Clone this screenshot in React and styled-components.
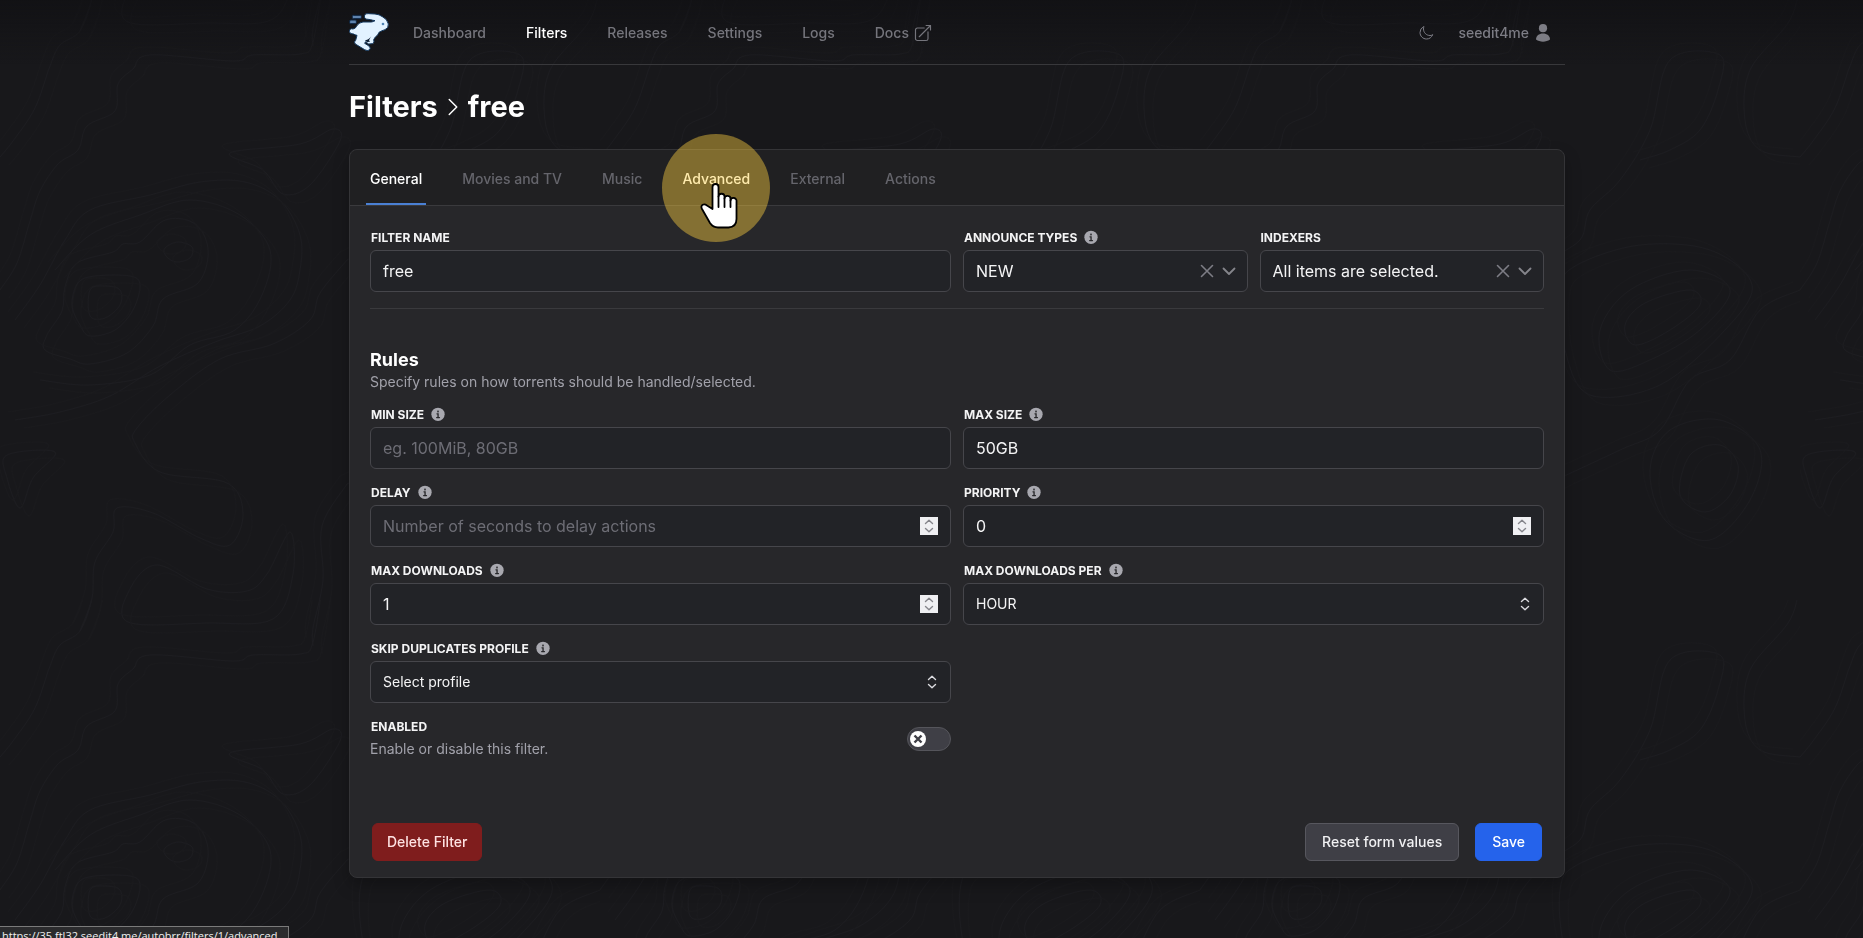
import React, { useState } from "react";
import styled, { createGlobalStyle, css } from "styled-components";

const GlobalStyle = createGlobalStyle`
  *, *::before, *::after { box-sizing: border-box; }
  html { background: #18181b; }
  body {
    margin: 0;
    color: #ffffff;
    font-family: Inter, "Liberation Sans", sans-serif;
    font-size: 14px;
    line-height: 20px;
    overflow: hidden;
  }
  button, input, select { font: inherit; color: inherit; margin: 0; }
  h1, h2, p { margin: 0; }
  a { color: inherit; text-decoration: none; }
  svg { display: block; flex: none; }
`;

/* ---------- page frame ---------- */

const Backdrop = styled.svg`
  position: fixed;
  inset: 0;
  width: 100%;
  height: 100%;
  z-index: -1;
`;

const Page = styled.div`
  min-height: 100vh;
  padding-left: 51px;
  background: linear-gradient(#0e0e1199, #18181b00 64px);
`;

const Container = styled.div`
  max-width: 1280px;
  margin: 0 auto;
  padding: 0 32px;
`;

const Header = styled.header`
  display: flex;
  align-items: center;
  justify-content: space-between;
  height: 65px;
  border-bottom: 1px solid #38383b;
`;

const HeaderGroup = styled.div`
  display: flex;
  align-items: center;
`;

const NavList = styled.nav`
  display: flex;
  gap: 40px;
  margin-left: 24px;
  padding-top: 2px;
`;

const NavLink = styled.a`
  display: flex;
  align-items: center;
  gap: 4px;
  font-weight: 500;
  color: ${(p) => (p.$active ? "#ffffff" : "#75757c")};
`;

const IconButton = styled.button`
  display: flex;
  align-items: center;
  gap: 6px;
  padding: 0;
  border: 0;
  background: none;
  color: #7d7d85;
  font-weight: 500;
`;

const UserArea = styled(HeaderGroup)`
  gap: 24px;
  padding: 2px 14px 0 0;
`;

const Title = styled.h1`
  display: flex;
  align-items: center;
  gap: 3px;
  padding: 24px 0;
  font-size: 29px;
  line-height: 36px;
  font-weight: 700;
`;

/* ---------- card and tabs ---------- */

const Card = styled.main`
  border: 1px solid #343437;
  border-radius: 8px;
  background: #27272a;
  box-shadow: 0 8px 16px rgba(0, 0, 0, 0.25);
`;

const Tabs = styled.nav`
  display: flex;
  gap: 32px;
  padding: 0 16px;
  border-bottom: 1px solid #3a3a3d;
  border-radius: 8px 8px 0 0;
  background: #202022;
`;

const Tab = styled.a`
  position: relative;
  padding: 19px 4px 14px;
  border-bottom: 2px solid ${(p) => (p.$state === "active" ? "#4a80d4" : "transparent")};
  font-weight: 500;
  color: ${(p) => (p.$state ? "#ffffff" : "#65656c")};
`;

const ClickHalo = styled.span`
  position: absolute;
  left: calc(50% - 54px);
  top: -16px;
  width: 108px;
  height: 108px;
  border-radius: 50%;
  background: rgba(255, 209, 66, 0.43);
  pointer-events: none;
  z-index: 2;

  svg {
    position: absolute;
    left: 38px;
    top: 49px;
  }
`;

const Form = styled.form`
  padding: 0 20px 16px;
`;

const TopSection = styled.div`
  padding: 24px 0 16px;
  border-bottom: 1px solid #3a3a3d;
`;

const Grid = styled.div`
  display: grid;
  grid-template-columns: 1fr 1fr;
  gap: 16px 12px;
`;

const SectionTitle = styled.h2`
  padding-top: 39px;
  font-size: 18px;
  line-height: 24px;
  font-weight: 700;
`;

const Muted = styled.p`
  color: #a1a1aa;
`;

const RulesGrid = styled(Grid)`
  margin-top: 15px;
`;

/* ---------- fields ---------- */

const FieldBox = styled.div`
  min-width: 0;
  grid-column: ${(p) => (p.$first ? 1 : "auto")};
`;

const LabelRow = styled.div`
  display: flex;
  align-items: center;
  gap: 6px;
  height: 16px;
  margin-bottom: 4px;
  color: #a8a8af;
`;

const Label = styled.label`
  padding-left: 1px;
  color: #f4f4f5;
  font-size: 12px;
  line-height: 16px;
  font-weight: 700;
  text-transform: uppercase;
  white-space: nowrap;
`;

const Control = styled.div`
  display: flex;
  align-items: center;
  height: 42px;
  padding-right: 11px;
  border: 1px solid #46464b;
  border-radius: 6px;
  background: #222327;
`;

const bareControl = css`
  flex: 1;
  min-width: 0;
  height: 40px;
  padding: 0 12px;
  border: 0;
  outline: 0;
  background: transparent;
  color: #f4f4f5;
  appearance: none;
`;

const Input = styled.input`
  ${bareControl}
  font-size: 16px;

  &::placeholder { color: #6d6d75; opacity: 1; }
  &[type="number"] { appearance: textfield; }
  &::-webkit-inner-spin-button { appearance: none; }
`;

const Select = styled.select`
  ${bareControl}
  font-size: ${(p) => (p.$large ? 16 : 14)}px;

  option { background: #27272a; }
`;

const Spinner = styled.button`
  display: grid;
  place-items: center;
  width: 18px;
  height: 18px;
  margin-right: 1px;
  padding: 0;
  border: 0;
  background: #efeff2;
  color: #85858b;
`;

const Trailing = styled.span`
  display: flex;
  align-items: center;
  gap: 8px;
  color: ${(p) => (p.$bright ? "#dcdce0" : "#85858b")};
  padding-right: ${(p) => (p.$bright ? 2 : 0)}px;
`;

const EnabledRow = styled.div`
  grid-column: 1;
  display: flex;
  align-items: center;
  justify-content: space-between;
  height: 40px;
`;

const Toggle = styled.label`
  position: relative;
  display: flex;
  align-items: center;
  justify-content: ${(p) => (p.$on ? "flex-end" : "flex-start")};
  width: 44px;
  height: 24px;
  padding: 0 2px;
  border: 1px solid #55555b;
  border-radius: 12px;
  background: ${(p) => (p.$on ? "#2563eb" : "#3f3f46")};

  input {
    position: absolute;
    inset: 0;
    margin: 0;
    opacity: 0;
  }
`;

const Knob = styled.span`
  display: grid;
  place-items: center;
  width: 16px;
  height: 16px;
  border-radius: 50%;
  background: #ffffff;
  color: #3f3f46;
`;

const Actions = styled.div`
  display: flex;
  gap: 16px;
  margin-top: 64px;
  padding: 0 2px;
`;

const tones = {
  danger: "padding: 0 14px; background: #7f1d1d; border-color: #7f1d1d; color: #fee2e2; margin-right: auto;",
  neutral: "background: #3f3f46; border-color: #57575e; color: #f1f1f3;",
  primary: "background: #2563eb; border-color: #2563eb;",
};

const Button = styled.button`
  height: 38px;
  padding: 0 16px;
  border: 1px solid;
  border-radius: 6px;
  color: #ffffff;
  font-weight: 500;
  ${(p) => tones[p.$tone]}
`;

const StatusBar = styled.div`
  position: fixed;
  left: 0;
  bottom: 0;
  height: 12px;
  padding: 1px 11px 0 2px;
  overflow: hidden;
  border-top: 1px solid #7a7a7a;
  border-right: 1px solid #7a7a7a;
  background: #2b2b2d;
  color: #f0f0f0;
  font-family: "Open Sans", "Noto Sans", sans-serif;
  font-size: 11px;
  line-height: 16px;
  white-space: nowrap;
`;

/* ---------- drawings ---------- */

const stroke = { fill: "none", stroke: "currentColor", strokeLinecap: "round", strokeLinejoin: "round" };

function Logo() {
  return (
    <svg width="40" height="40" viewBox="27 36 120 120" aria-hidden="true">
      <g fill="#5f83ad" stroke="#0b2340" strokeWidth="3">
        <rect x="37" y="46" width="27" height="10" rx="3" />
        <rect x="29" y="60" width="20" height="11" rx="3" />
      </g>
      <path
        d="M74 45 Q77 40 85 41 L105 42 Q118 43 127 50 Q142 57 145 72 Q146 85 135 89 Q124 92 117 97 Q115 105 106 111 L101 119 Q105 128 97 131 L86 132 L77 125 L74 130 L87 138 Q94 145 88 150 Q82 154 74 149 L46 132 Q40 126 47 121 L51 106 Q44 105 41 102 Q29 103 28 94 Q29 84 39 87 Q47 86 50 78 Q57 67 69 66 L94 66 Q101 65 105 62 Q98 61 92 59 L77 57 Q71 52 74 45 Z"
        fill="#e2f2ff"
        stroke="#15395f"
        strokeWidth="3"
        strokeLinejoin="round"
      />
      <path d="M75 121 Q89 118 94 108 L87 121 L90 125 L81 126 Z" fill="#0d1e33" />
      <circle cx="129" cy="72" r="4" fill="#4e83b4" />
    </svg>
  );
}

const ExternalIcon = () => (
  <svg width="20" height="20" viewBox="0 0 24 24" {...stroke} strokeWidth="1.4">
    <path d="M13.5 6H5.25A2.25 2.25 0 0 0 3 8.25v10.5A2.25 2.25 0 0 0 5.25 21h10.5A2.25 2.25 0 0 0 18 18.75V10.5m-10.5 6L21 3m0 0h-5.25M21 3v5.25" />
  </svg>
);

const MoonIcon = () => (
  <svg width="16" height="16" viewBox="0 0 24 24" {...stroke} strokeWidth="1.5">
    <path d="M21.752 15.002A9.72 9.72 0 0 1 18 15.75c-5.385 0-9.75-4.365-9.75-9.75 0-1.33.266-2.597.748-3.752A9.753 9.753 0 0 0 3 11.25C3 16.635 7.365 21 12.75 21a9.753 9.753 0 0 0 9.002-5.998Z" />
  </svg>
);

const UserIcon = () => (
  <svg width="16" height="18" viewBox="0 0 16 18" fill="currentColor">
    <circle cx="8" cy="4.2" r="4.1" />
    <path d="M1 15.6C1 11.8 4 9.6 8 9.6s7 2.2 7 6C13 17 10.6 17.7 8 17.7S3 17 1 15.6Z" />
  </svg>
);

const TitleChevron = () => (
  <svg width="24" height="24" viewBox="0 0 24 24" {...stroke} strokeWidth="1.5">
    <path d="m8.25 4.5 7.5 7.5-7.5 7.5" />
  </svg>
);

const InfoIcon = () => (
  <svg width="16" height="16" viewBox="0 0 24 24">
    <circle cx="12" cy="11" r="10" fill="currentColor" />
    <g fill="none" stroke="#27272a" strokeWidth="2" strokeLinecap="round">
      <path d="M10.500 10.300h1.600v5.500M10 15.900h4.200" />
      <circle cx="12" cy="6.600" r="0.500" />
    </g>
  </svg>
);

const ClearIcon = () => (
  <svg width="14" height="14" viewBox="0 0 14 14" {...stroke} strokeWidth="1.6">
    <path d="m1.500 1.500 11 11M12.500 1.500l-11 11" />
  </svg>
);

const DownIcon = () => (
  <svg width="14" height="14" viewBox="0 0 14 14" {...stroke} strokeWidth="1.8">
    <path d="m1.500 4.500 5.500 5.500 5.500-5.500" />
  </svg>
);

const UpDownIcon = () => (
  <svg width="10" height="14" viewBox="0 0 10 14" {...stroke} strokeWidth="1.4">
    <path d="m1.500 4.500L5 1.300l3.500 3.200M1.500 9.500 5 12.700l3.500-3.200" />
  </svg>
);

const CrossIcon = () => (
  <svg width="10" height="10" viewBox="0 0 10 10" fill="none" stroke="currentColor" strokeWidth="2.4">
    <path d="m1.500 1.500 7 7M8.500 1.500l-7 7" />
  </svg>
);

const HandIcon = () => (
  <svg width="38" height="46" viewBox="0 0 38 46" fill="#ffffff" stroke="#000000" strokeWidth="1.8" strokeLinejoin="round" strokeLinecap="round">
    <path d="M12.500 26V4a3 3 0 0 1 6 0v9.500a3 3 0 0 1 6 0.500v1.500a3 3 0 0 1 6 0.700v1.300a3 3 0 0 1 6 1V36q0 8-8 8.500H18q-5 0-8-4.500L2 26c-2-4 2-6 5-3.500Z" />
    <path d="M18.500 13.500V24M24.500 15.500V24M30.500 17.500V24" fill="none" />
  </svg>
);

/* Turns "x,y x,y ..." into a smooth curve through the points. */
function curve(list, closed) {
  const pts = list.split(" ").map((s) => s.split(",").map(Number));
  const n = pts.length;
  const at = (i) => (closed ? pts[(i + n) % n] : pts[Math.max(0, Math.min(n - 1, i))]);
  let d = `M${at(0)}`;
  for (let i = 0; i < (closed ? n : n - 1); i++) {
    const [a, b, c, e] = [at(i - 1), at(i), at(i + 1), at(i + 2)];
    d += `C${b[0] + (c[0] - a[0]) / 6},${b[1] + (c[1] - a[1]) / 6} ${c[0] - (e[0] - b[0]) / 6},${c[1] - (e[1] - b[1]) / 6} ${c}`;
  }
  return d;
}

const contours = [
  ["0,157 13,141 35,108 50,66 60,45 80,31 92,-2 95,-38"],
  ["0,290 17,263 30,221 40,191 58,164 78,150 87,126 115,111 118,84 133,69 150,55 233,61 253,55 300,54 313,42 323,-20"],
  ["65,287 77,263 113,252 123,244 140,242 163,221 187,220 203,233 208,257 197,284 163,299 153,326 127,353 90,364 70,359 45,350 47,335 62,311", true],
  ["78,283 95,276 130,276 140,285 133,310 115,330 90,336 80,325 72,305", true],
  ["90,290 105,286 120,290 120,305 105,318 90,316", true],
  ["165,248 178,242 192,247 190,258 176,262 166,256", true],
  ["230,153 300,144 333,129 340,141 310,185 283,194 263,170", true],
  ["347,260 320,293 310,320 273,344 220,359 170,395 137,428 135,443 160,472 227,483 243,514 230,545 200,538 153,513 117,508 113,532 95,562 92,598 80,631"],
  ["128,622 130,589 157,565 207,589 247,591 267,574 290,532 293,574 273,619 207,623", true],
  ["7,455 55,452 33,478 20,508 7,478", true],
  ["15,420 60,412 110,396 160,366 215,342 260,326 290,300 300,270 300,235 280,200 245,182 200,182 150,195 90,210 65,240 40,285 15,320"],
  ["40,380 90,385 150,375 190,345 235,330 262,295 270,250 240,215 190,200 140,215 90,235 55,270"],
  ["347,484 322,526 323,580 313,628 313,646"],
  ["347,260 380,240 390,210 420,180 450,130 470,60 520,55 518,90 500,130 470,150 440,160"],
  ["600,290 560,310 530,360 490,380 460,430 420,450 347,484"],
  ["400,330 430,290 490,270 530,290 500,330 450,360 410,370", true],
  ["425,325 445,303 490,290 500,305 470,330 435,345", true],
  ["360,290 377,265 440,245 510,250 552,285 525,330 460,385 390,395 365,350", true],
  ["600,157 560,150 545,120 550,70 590,20 600,-20"],
  ["470,430 520,420 560,450 550,500 510,540 465,520 450,470", true],
  ["490,455 520,445 538,465 530,495 505,512 480,495", true],
];

function TopographicBackdrop() {
  return (
    <Backdrop aria-hidden="true">
      <defs>
        <pattern id="contours" width="600" height="600" patternUnits="userSpaceOnUse">
          {[0, -600].map((dy) => (
            <g key={dy} transform={`translate(0 ${dy})`} fill="none">
              {contours.map(([pts, closed]) => (
                <g key={pts}>
                  <path d={curve(pts, closed)} stroke="#1d1d21" />
                  <path d={curve(pts, closed)} stroke="#1a1a1d" transform="translate(9 8)" />
                  <path d={curve(pts, closed)} stroke="#1a1a1d" transform="translate(-7 -8)" />
                </g>
              ))}
            </g>
          ))}
        </pattern>
      </defs>
      <rect width="100%" height="100%" fill="url(#contours)" />
    </Backdrop>
  );
}

/* ---------- field components ---------- */

function Field({ id, label, info, first, children }) {
  return (
    <FieldBox $first={first}>
      <LabelRow>
        <Label htmlFor={id}>{label}</Label>
        {info && <InfoIcon />}
      </LabelRow>
      <Control>{children}</Control>
    </FieldBox>
  );
}

function TextField({ id, value, placeholder, ...rest }) {
  return (
    <Field id={id} {...rest}>
      <Input id={id} type="text" defaultValue={value} placeholder={placeholder} />
    </Field>
  );
}

function NumberField({ id, value, placeholder, ...rest }) {
  return (
    <Field id={id} {...rest}>
      <Input id={id} type="number" defaultValue={value} placeholder={placeholder} />
      <Spinner type="button" aria-label="Change value">
        <UpDownIcon />
      </Spinner>
    </Field>
  );
}

function SelectField({ id, value, ...rest }) {
  return (
    <Field id={id} {...rest}>
      <Select id={id}>
        <option>{value}</option>
      </Select>
      <Trailing $bright>
        <UpDownIcon />
      </Trailing>
    </Field>
  );
}

function MultiSelectField({ id, value, ...rest }) {
  return (
    <Field id={id} {...rest}>
      <Select id={id} $large>
        <option>{value}</option>
      </Select>
      <Trailing>
        <IconButton type="button" aria-label="Clear selection">
          <ClearIcon />
        </IconButton>
        <DownIcon />
      </Trailing>
    </Field>
  );
}

const navItems = ["Dashboard", "Filters", "Releases", "Settings", "Logs", "Docs"];
const tabItems = ["General", "Movies and TV", "Music", "Advanced", "External", "Actions"];
const tabStates = { General: "active", Advanced: "hover" };

export default function App() {
  const [enabled, setEnabled] = useState(false);
  return (
    <>
      <GlobalStyle />
      <TopographicBackdrop />
      <Page>
        <Container>
          <Header>
            <HeaderGroup>
              <a href="#home" aria-label="Home">
                <Logo />
              </a>
              <NavList>
                {navItems.map((item) => (
                  <NavLink key={item} href={`#${item}`} $active={item === "Filters"}>
                    {item}
                    {item === "Docs" && <ExternalIcon />}
                  </NavLink>
                ))}
              </NavList>
            </HeaderGroup>
            <UserArea>
              <IconButton type="button" aria-label="Toggle theme">
                <MoonIcon />
              </IconButton>
              <IconButton type="button">
                seedit4me
                <UserIcon />
              </IconButton>
            </UserArea>
          </Header>

          <Title>
            <a href="#filters">Filters</a>
            <TitleChevron />
            free
          </Title>

          <Card>
            <Tabs>
              {tabItems.map((item) => (
                <Tab key={item} href={`#${item}`} $state={tabStates[item]}>
                  {item}
                  {item === "Advanced" && (
                    <ClickHalo>
                      <HandIcon />
                    </ClickHalo>
                  )}
                </Tab>
              ))}
            </Tabs>

            <Form onSubmit={(e) => e.preventDefault()}>
              <TopSection>
                <Grid>
                  <TextField id="name" label="Filter name" value="free" />
                  <Grid>
                    <MultiSelectField id="announce" label="Announce types" info value="NEW" />
                    <MultiSelectField id="indexers" label="Indexers" value="All items are selected." />
                  </Grid>
                </Grid>
              </TopSection>

              <SectionTitle>Rules</SectionTitle>
              <Muted>Specify rules on how torrents should be handled/selected.</Muted>

              <RulesGrid>
                <TextField id="min" label="Min size" info placeholder="eg. 100MiB, 80GB" />
                <TextField id="max" label="Max size" info value="50GB" />
                <NumberField id="delay" label="Delay" info placeholder="Number of seconds to delay actions" />
                <NumberField id="priority" label="Priority" info value="0" />
                <NumberField id="downloads" label="Max downloads" info value="1" />
                <SelectField id="per" label="Max downloads per" info value="HOUR" />
                <SelectField id="skip" label="Skip duplicates profile" info first value="Select profile" />
                <EnabledRow>
                  <div>
                    <LabelRow>
                      <Label htmlFor="enabled">Enabled</Label>
                    </LabelRow>
                    <Muted>Enable or disable this filter.</Muted>
                  </div>
                  <Toggle $on={enabled}>
                    <input id="enabled" type="checkbox" checked={enabled} onChange={() => setEnabled(!enabled)} />
                    <Knob>
                      <CrossIcon />
                    </Knob>
                  </Toggle>
                </EnabledRow>
              </RulesGrid>

              <Actions>
                <Button type="button" $tone="danger">Delete Filter</Button>
                <Button type="reset" $tone="neutral">Reset form values</Button>
                <Button type="submit" $tone="primary">Save</Button>
              </Actions>
            </Form>
          </Card>
        </Container>
      </Page>
      <StatusBar>https://35.ftl32.seedit4.me/autobrr/filters/1/advanced</StatusBar>
    </>
  );
}
